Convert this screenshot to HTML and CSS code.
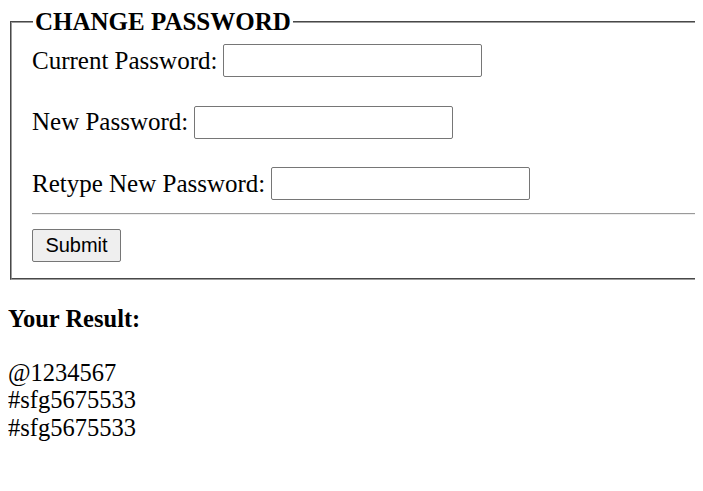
FILE: index.html
```html
<!DOCTYPE html>
<html>
<head>
<meta charset="utf-8">
<title>Change Password</title>
<link rel="stylesheet" href="styles.css">
</head>
<body>
<form class="pw-form">
  <fieldset class="pw-box">
    <legend class="pw-legend">CHANGE PASSWORD</legend>
    <div class="pw-row">
      <label class="pw-label" for="cur">Current Password:</label>
      <input class="pw-input" id="cur" type="password">
    </div>
    <div class="pw-row">
      <label class="pw-label" for="new">New Password:</label>
      <input class="pw-input" id="new" type="password">
    </div>
    <div class="pw-row">
      <label class="pw-label" for="re">Retype New Password:</label>
      <input class="pw-input" id="re" type="password">
    </div>
    <hr class="pw-rule">
    <button class="pw-submit" type="button">Submit</button>
  </fieldset>
</form>
<p class="result-title">Your Result:</p>
<p class="result-lines">@1234567<br>#sfg5675533<br>#sfg5675533</p>
</body>
</html>
```
FILE: styles.css
```css
body {
  margin: 8px;
  font-family: "Liberation Serif", "Times New Roman", serif;
  font-size: 24px;
  line-height: 27.5px;
  color: #000;
  background: #fff;
}
.pw-form {
  margin: 0;
}
.pw-box {
  margin: 0 -8px 0 2px;
  min-width: 0;
  border: 2px groove #9c9c9c;
  border-right-width: 0;
  padding: 8px 0 16px 20px;
  font-size: 25px;
  line-height: 28px;
}
.pw-legend {
  font-weight: bold;
  padding: 0 2px;
  margin-left: 1px;
}
.pw-row {
  display: flex;
  align-items: center;
  gap: 6px;
  height: 33px;
  margin-top: 28.5px;
}
.pw-row:first-of-type {
  margin-top: 0;
}
.pw-label {
  white-space: nowrap;
}
.pw-input {
  box-sizing: border-box;
  width: 259px;
  height: 33px;
  border: 1px solid #767676;
  border-radius: 2px;
  padding: 1px 3px;
  font: 20px "Liberation Sans", Arial, sans-serif;
  margin: 0;
}
.pw-rule {
  margin: 13px 0 14px;
  border: 0;
  border-top: 1px solid #9a9a9a;
  border-bottom: 1px solid #eeeeee;
  height: 0;
}
.pw-submit {
  box-sizing: border-box;
  height: 33px;
  width: 89px;
  padding: 0;
  margin: 0;
  font: 20px "Liberation Sans", Arial, sans-serif;
  color: #000;
  background: #efefef;
  border: 1px solid #767676;
  border-radius: 2px;
}
.result-title {
  font-weight: bold;
  font-size: 24.5px;
  margin: 25px 0 24px;
}
.result-lines {
  font-size: 24.5px;
  margin: 26px 0 24px;
}
```
